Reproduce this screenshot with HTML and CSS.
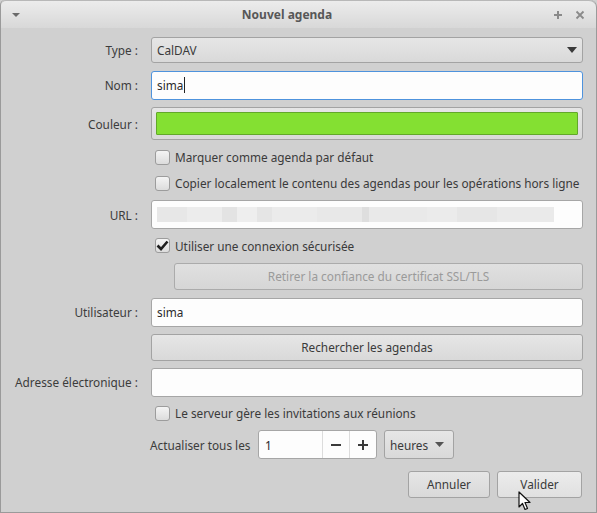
FILE: index.html
```html
<!DOCTYPE html>
<html lang="fr">
<head>
<meta charset="utf-8">
<title>Nouvel agenda</title>
<link rel="stylesheet" href="styles.css">
</head>
<body>
<div class="window">
  <div class="titlebar">
    <svg class="tb-menu" width="10" height="6" viewBox="0 0 10 6"><path d="M1 1 H9 L5 5 Z" fill="#6a6a6a"/></svg>
    <div class="title">Nouvel agenda</div>
    <div class="tb-btns">
      <svg width="10" height="10" viewBox="0 0 10 10"><path d="M5 1 V9 M1 5 H9" stroke="#8a8a8a" stroke-width="2"/></svg>
      <svg width="10" height="10" viewBox="0 0 10 10"><path d="M1.5 1.5 L8.5 8.5 M8.5 1.5 L1.5 8.5" stroke="#8a8a8a" stroke-width="1.8"/></svg>
    </div>
  </div>
  <div class="form">
    <div class="label">Type :</div>
    <div class="combo wide"><span>CalDAV</span><svg width="10" height="6" viewBox="0 0 10 6"><path d="M0 0 H10 L5 6 Z" fill="#3a3a3a"/></svg></div>

    <div class="label">Nom :</div>
    <div class="entry focus"><span>sima</span><span class="caret"></span></div>

    <div class="label">Couleur :</div>
    <div class="button colorbtn"><div class="swatch"></div></div>

    <div class="label"></div>
    <label class="check"><span class="box"></span>Marquer comme agenda par défaut</label>

    <div class="label"></div>
    <label class="check"><span class="box"></span>Copier localement le contenu des agendas pour les opérations hors ligne</label>

    <div class="label">URL :</div>
    <div class="entry"><div class="blur"></div></div>

    <div class="label"></div>
    <label class="check"><span class="box checked"><svg width="13" height="11" viewBox="0 0 13 11"><path d="M1.5 5.5 L5 9 L11.5 1.5" fill="none" stroke="#1e1e1e" stroke-width="2.6"/></svg></span>Utiliser une connexion sécurisée</label>

    <div class="label"></div>
    <div class="button indent disabled">Retirer la confiance du certificat SSL/TLS</div>

    <div class="label">Utilisateur :</div>
    <div class="entry"><span>sima</span></div>

    <div class="label"></div>
    <div class="button">Rechercher les agendas</div>

    <div class="label">Adresse électronique :</div>
    <div class="entry"></div>

    <div class="label"></div>
    <label class="check"><span class="box"></span>Le serveur gère les invitations aux réunions</label>

    <div class="label"></div>
    <div class="refresh">
      <span class="rtext">Actualiser tous les</span>
      <div class="spin">
        <span class="spin-val">1</span>
        <span class="spin-btn"><svg width="10" height="2" viewBox="0 0 10 2"><rect width="10" height="2" fill="#3a3a3a"/></svg></span>
        <span class="spin-btn"><svg width="10" height="10" viewBox="0 0 10 10"><path d="M5 0 V10 M0 5 H10" stroke="#3a3a3a" stroke-width="2"/></svg></span>
      </div>
      <div class="combo small"><span>heures</span><svg width="9" height="5" viewBox="0 0 9 5"><path d="M0 0 H9 L4.5 5 Z" fill="#555"/></svg></div>
    </div>

    <div class="label"></div>
    <div class="actions">
      <div class="button act annuler">Annuler</div>
      <div class="button act valider">Valider</div>
    </div>
  </div>
  <svg class="pointer" width="14" height="20" viewBox="0 0 14 20"><path d="M1 1 L1 16 L4.5 12.5 L7 18.5 L9.5 17.5 L7 11.5 L12 11.5 Z" fill="#fff" stroke="#111" stroke-width="1.2" stroke-linejoin="round"/></svg>
</div>
</body>
</html>
```

FILE: styles.css
```css
* { box-sizing: border-box; }
html, body { margin: 0; padding: 0; background: #d0d0d0; }
body {
  font-family: "Noto Sans", "Open Sans", "DejaVu Sans", sans-serif;
  font-size: 11.8px;
  color: #3c3c3c;
}
.window {
  position: relative;
  width: 597px;
  height: 513px;
  background: #d0d0d0;
  border: 1px solid #9a9a9a;
  border-top: none;
  border-radius: 5px 7px 0 0;
  overflow: hidden;
  white-space: nowrap;
}
.titlebar {
  height: 28px;
  display: flex;
  align-items: center;
  padding: 0 11px 0 10px;
  background: linear-gradient(#ececec, #d8d8d8);
  border-top: 1px solid #b8b8b8;
  border-radius: 5px 7px 0 0;
}
.title {
  flex: 1;
  text-align: center;
  font-weight: bold;
  font-size: 12px;
  color: #575757;
}
.tb-btns { display: flex; gap: 12px; align-items: center; }

.form {
  display: grid;
  grid-template-columns: 125px 432px;
  column-gap: 13px;
  padding: 5px 0 0 12px;
  grid-template-rows: 34px 36px 41px 26px 26px 37px 25px 36px 36px 34px 36px 26px 37px 42px;
  align-items: center;
}
.label { text-align: right; color: #3c3c3c; }

.entry {
  height: 29px;
  background: #fdfdfd;
  border: 1px solid #a6a6a6;
  border-radius: 3px;
  display: flex;
  align-items: center;
  padding: 0 5px;
  color: #2a2a2a;
}
.entry.focus { border-color: #4e93dd; }
.caret { width: 1px; height: 16px; background: #222; margin-left: 1px; }

.button, .combo {
  height: 27px;
  background: linear-gradient(#e6e6e6, #d9d9d9);
  border: 1px solid #a3a3a3;
  border-radius: 3px;
  display: flex;
  align-items: center;
  justify-content: center;
  color: #3a3a3a;
}
.combo { justify-content: space-between; padding: 0 5px 0 5px; height: 26px; }
.colorbtn { height: 33px; padding: 4px; }
.swatch {
  width: 100%;
  height: 100%;
  background: #84e032;
  border: 1px solid #62a82a;
  border-radius: 1px;
}
.indent { margin-left: 23px; }
.disabled { color: #9a9a9a; background: linear-gradient(#e0e0e0, #d6d6d6); border-color: #ababab; }

.check { display: flex; align-items: center; gap: 5px; padding-left: 4px; color: #3a3a3a; }
.box {
  width: 15px; height: 15px;
  flex: none;
  border: 1px solid #9c9c9c;
  border-radius: 3px;
  background: linear-gradient(#f4f4f4, #dcdcdc);
  display: flex; align-items: center; justify-content: center;
}
.box svg { margin-top: -1px; }

.blur {
  height: 15px;
  width: 397px;
  background: linear-gradient(90deg,
    #e7e7e7 0 30px, #ececec 30px 65px, #e3e3e3 65px 80px, #eeeeee 80px 100px,
    #e5e5e5 100px 115px, #ebebeb 115px 160px, #e8e8e8 160px 205px, #dedede 205px 212px,
    #e9e9e9 212px 270px, #ebebeb 270px 300px, #e6e6e6 300px 340px, #eaeaea 340px 397px);
}

.refresh { display: flex; align-items: center; }
.rtext { margin-left: -1px; width: 108px; }
.spin {
  width: 119px; height: 29px;
  display: flex;
  background: #fdfdfd;
  border: 1px solid #a6a6a6;
  border-radius: 3px;
}
.spin-val { flex: 1; display: flex; align-items: center; padding-left: 6px; color: #2a2a2a; }
.spin-btn {
  width: 27px;
  display: flex; align-items: center; justify-content: center;
  border-left: 1px solid #dcdcdc;
}
.combo.small { width: 70px; height: 29px; margin-left: 7px; padding: 0 9px 0 5px; }

.actions { display: flex; justify-content: flex-end; gap: 7px; padding-right: 1px; }
.act { height: 27px; }
.annuler { width: 82px; }
.valider { width: 85px; background: linear-gradient(#ececec, #e0e0e0); }

.pointer { position: absolute; left: 517px; top: 491px; }
```
